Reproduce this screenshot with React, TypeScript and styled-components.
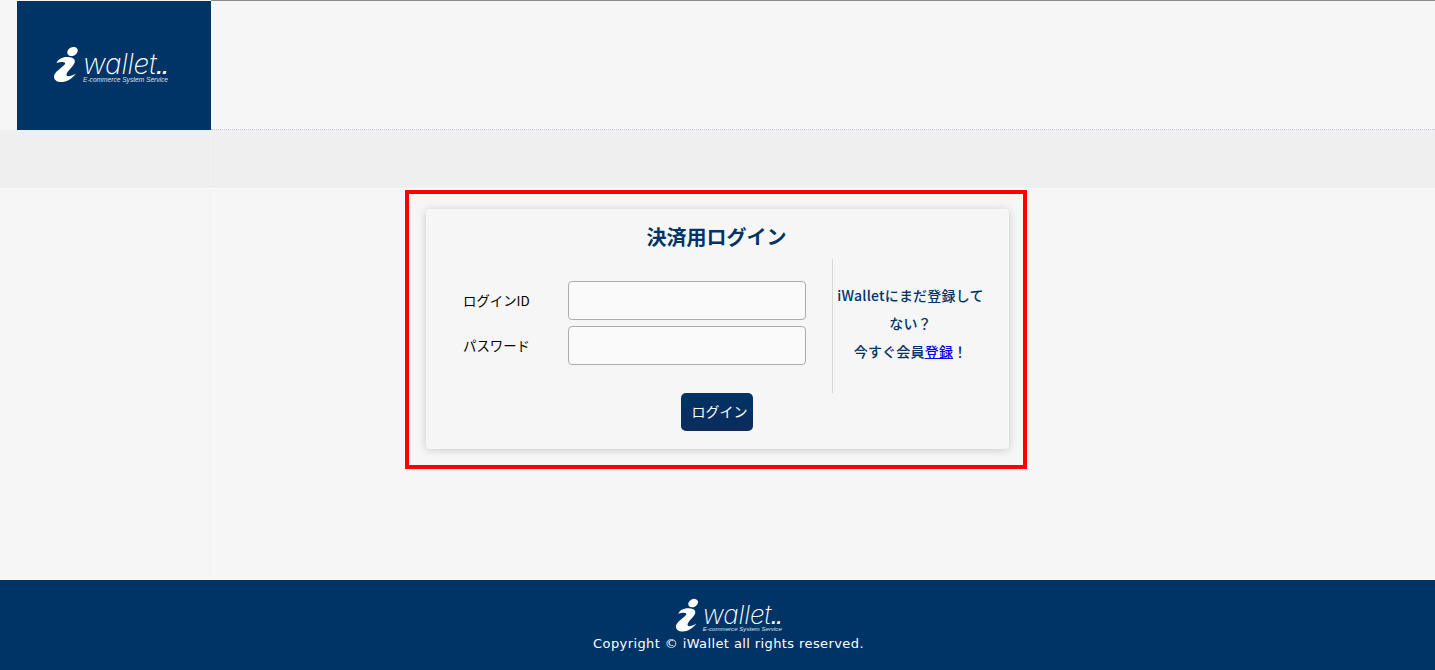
import React from 'react';
import styled, { createGlobalStyle } from 'styled-components';

const GlobalStyle = createGlobalStyle`
  html, body {
    margin: 0;
    padding: 0;
    background: #f6f6f6;
  }

  body {
    font-family: "Liberation Sans", "Noto Sans CJK JP", sans-serif;
  }
`;

const Page = styled.div`
  width: 1435px;
  height: 670px;
  display: flex;
  flex-direction: column;
  overflow: hidden;
  background: #f6f6f6;
`;

const Header = styled.header`
  height: 130px;
  display: flex;
  padding-left: 17px;
  flex: none;
`;

const LogoPanel = styled.div`
  width: 194px;
  height: 129px;
  margin-top: 1px;
  flex: none;
  background: #003366;
  display: flex;
  align-items: flex-start;
  padding: 45px 0 0 36px;
  box-sizing: border-box;
`;

const HeaderRest = styled.div`
  flex: 1;
  border-top: 1px solid #8a8a8a;
  border-bottom: 1px dotted #c0c2dc;
`;

const SubBar = styled.div`
  height: 58px;
  flex: none;
  display: flex;
  background: #efefef;
  border-bottom: 1px solid #fafafa;
`;

const SubBarSide = styled.div`
  width: 211px;
  border-right: 1px solid #f2f2f2;
  box-sizing: border-box;
`;

const Content = styled.main`
  flex: 1;
  display: flex;
`;

const SideColumn = styled.div`
  width: 211px;
  flex: none;
  border-right: 1px solid #f2f2f2;
  box-sizing: border-box;
`;

const Highlight = styled.div`
  width: 622px;
  height: 279px;
  margin: 1px 0 0 194px;
  padding: 15px 17px 16px 17px;
  border: 4px solid #ff0000;
  box-sizing: border-box;
`;

const Card = styled.section`
  width: 583px;
  height: 240px;
  box-sizing: border-box;
  border-radius: 4px;
  background: #f6f6f6;
  box-shadow: 0 1px 9px rgba(0, 0, 0, 0.18);
  display: flex;
  flex-direction: column;
  align-items: center;
  padding-top: 14px;
`;

const Title = styled.h1`
  margin: 0 2px 0 0;
  font-family: "Noto Sans CJK JP", sans-serif;
  font-size: 20px;
  line-height: 27px;
  font-weight: 700;
  color: #003366;
`;

const CardBody = styled.div`
  align-self: stretch;
  display: flex;
  margin-top: 9px;
  height: 134px;
`;

const FormColumn = styled.div`
  width: 407px;
  box-sizing: border-box;
  border-right: 1px solid #d8d8d8;
  padding: 22px 0 0 37px;
  display: flex;
  flex-direction: column;
  gap: 6px;
  flex: none;
`;

const FieldRow = styled.label`
  display: flex;
  align-items: center;
`;

const FieldLabel = styled.span`
  width: 105px;
  flex: none;
  padding-bottom: 2px;
  font-family: "Noto Sans CJK JP", sans-serif;
  font-size: 13.4px;
  color: #000000;
`;

const TextInput = styled.input`
  width: 238px;
  height: 39px;
  box-sizing: border-box;
  background: #fafafa;
  border: 1px solid #adadad;
  border-radius: 4px;
  outline: none;
`;

const RegisterNote = styled.div`
  flex: 1;
  padding: 22px 21px 0 0;
  font-family: "Noto Sans CJK JP", sans-serif;
  font-size: 14px;
  line-height: 28px;
  font-weight: 500;
  letter-spacing: 0.2px;
  color: #003366;
  text-align: center;
  box-sizing: border-box;
`;

const NoteLine = styled.div`
  white-space: nowrap;
`;

const RegisterLink = styled.a`
  color: #0000ee;
  text-decoration: underline;
`;

const LoginButton = styled.button`
  width: 72px;
  height: 38px;
  flex: none;
  border: none;
  border-radius: 5px;
  background: linear-gradient(#003366, #0c2c5c);
  color: #ffffff;
  font-family: "Noto Sans CJK JP", sans-serif;
  font-size: 14px;
  padding: 0 0 3px 6px;
  position: relative;
  left: -1px;
`;

const Footer = styled.footer`
  height: 90px;
  flex: none;
  background: #003366;
  display: flex;
  flex-direction: column;
  align-items: center;
  padding-top: 18px;
  box-sizing: border-box;
`;

const FooterLogo = styled.div`
  position: relative;
  left: 11px;
`;

const Copyright = styled.div`
  margin-top: 3px;
  font-family: "DejaVu Sans", sans-serif;
  font-size: 13px;
  line-height: 16px;
  letter-spacing: 0.4px;
  color: #ffffff;
  position: relative;
  left: 11px;
`;

const LogoWrap = styled.div<{ $scale: number }>`
  display: flex;
  align-items: flex-start;
  color: #ffffff;
  zoom: ${(p) => p.$scale};
`;

const LogoText = styled.div`
  margin-left: 4px;
  padding-top: 10px;
  display: flex;
  flex-direction: column;
`;

const WordMark = styled.span`
  font-family: Inter, sans-serif;
  font-size: 28px;
  line-height: 17px;
  font-weight: 200;
  font-style: italic;
  letter-spacing: -0.2px;
  white-space: nowrap;
`;

const Dots = styled.b`
  font-family: "Liberation Sans", sans-serif;
  font-size: 20px;
  font-weight: 700;
  font-style: italic;
  letter-spacing: 0.3px;
`;

const TagLine = styled.span`
  font-family: "Liberation Sans", sans-serif;
  font-size: 6.6px;
  line-height: 7px;
  font-style: italic;
  white-space: nowrap;
  opacity: 0.85;
`;

const LogoMark = () => (
  <svg width="26" height="37" viewBox="0 0 26 37" fill="#ffffff" aria-hidden="true">
    <ellipse cx="19.5" cy="5.5" rx="5.5" ry="4.2" transform="rotate(-30 19.5 5.5)" />
    <path d="M3.5 17 C5 13 10 10.5 15 11 C20 11.5 23 13 21.5 17 C20 21 14 25 13.5 28.5 C13.2 31 17 31 23 27.5 C19 33 13 36.5 7 36 C2 35.6 0 32 1.5 28.5 C3.5 24.5 10 21 12 18 C13 16 10 15 3.5 17 Z" />
  </svg>
);

const Logo = ({ scale }: { scale: number }) => (
  <LogoWrap $scale={scale}>
    <LogoMark />
    <LogoText>
      <WordMark>
        wallet<Dots>..</Dots>
      </WordMark>
      <TagLine>E-commerce System Service</TagLine>
    </LogoText>
  </LogoWrap>
);

export default function App() {
  return (
    <Page>
      <GlobalStyle />
      <Header>
        <LogoPanel>
          <Logo scale={1} />
        </LogoPanel>
        <HeaderRest />
      </Header>
      <SubBar>
        <SubBarSide />
      </SubBar>
      <Content>
        <SideColumn />
        <Highlight>
          <Card>
            <Title>決済用ログイン</Title>
            <CardBody>
              <FormColumn>
                <FieldRow>
                  <FieldLabel>ログインID</FieldLabel>
                  <TextInput type="text" />
                </FieldRow>
                <FieldRow>
                  <FieldLabel>パスワード</FieldLabel>
                  <TextInput type="password" />
                </FieldRow>
              </FormColumn>
              <RegisterNote>
                <NoteLine>iWalletにまだ登録して</NoteLine>
                <NoteLine>ない？</NoteLine>
                <NoteLine>
                  今すぐ会員<RegisterLink href="#">登録</RegisterLink>！
                </NoteLine>
              </RegisterNote>
            </CardBody>
            <LoginButton type="button">ログイン</LoginButton>
          </Card>
        </Highlight>
      </Content>
      <Footer>
        <FooterLogo>
          <Logo scale={0.93} />
        </FooterLogo>
        <Copyright>Copyright © iWallet all rights reserved.</Copyright>
      </Footer>
    </Page>
  );
}
